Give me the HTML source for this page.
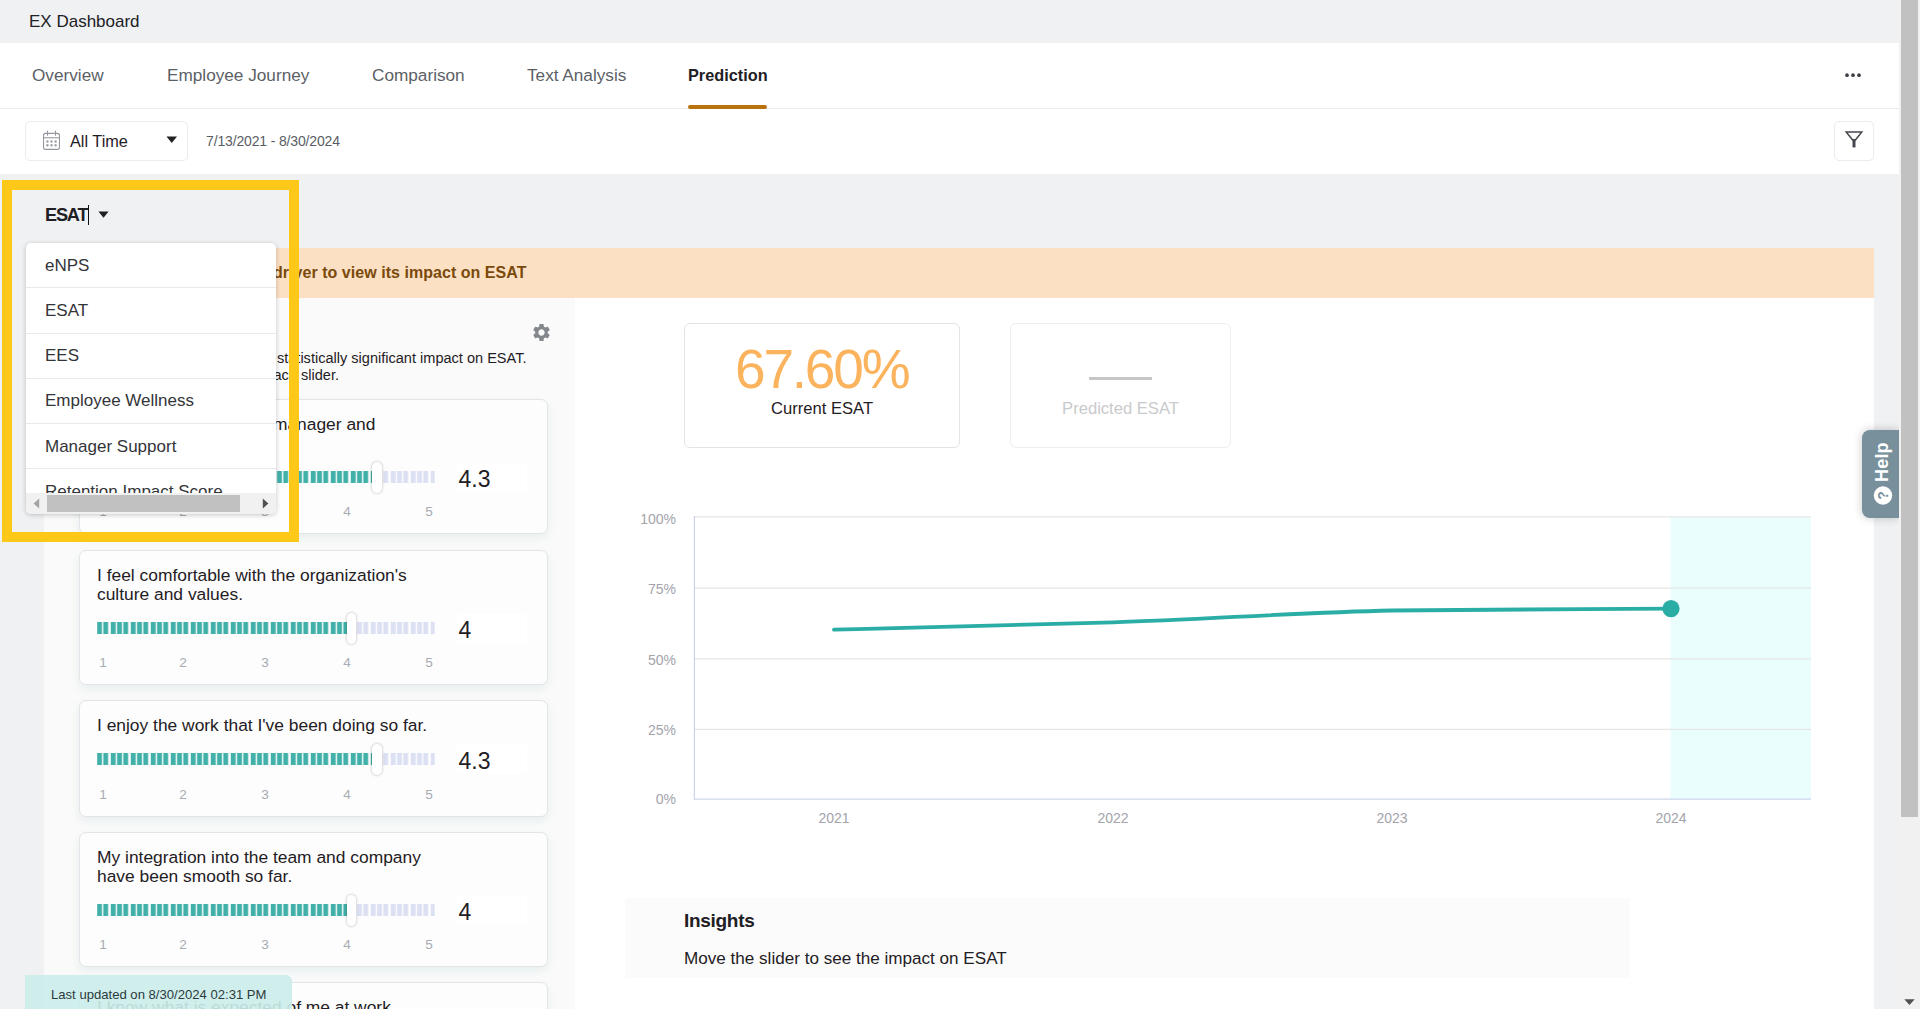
<!DOCTYPE html>
<html lang="en">
<head>
<meta charset="utf-8">
<title>EX Dashboard</title>
<style>
*{box-sizing:border-box;margin:0;padding:0}
html,body{width:1920px;height:1009px;overflow:hidden;background:#f0f1f3;font-family:"Liberation Sans",sans-serif;color:#1f2024}
.abs{position:absolute}
.t{position:absolute;white-space:nowrap;line-height:1}
#topbar{left:0;top:0;width:1899px;height:43px;background:#f0f1f3}
#nav{left:0;top:43px;width:1899px;height:66px;background:#fff;border-bottom:1px solid #eaebee}
#filterbar{left:0;top:109px;width:1899px;height:65px;background:#fff}
.tab{color:#5c5f66;font-size:17.2px}
#banner{left:44px;top:248px;width:1830px;height:50px;background:#fce0c4}
#lpanel{left:44px;top:298px;width:531px;height:711px;background:#fafafa}
#rpanel{left:575px;top:298px;width:1299px;height:711px;background:#fff}
.card{position:absolute;left:79px;width:469px;background:#fdfdfd;border:1px solid #e2e4e8;border-radius:7px;box-shadow:0 4px 10px rgba(40,120,120,.09)}
.q{position:absolute;left:17px;top:15px;font-size:17.4px;line-height:19px;color:#1f2024;white-space:nowrap}
.track{position:absolute;left:17px;height:12px;width:338px}
.thumb{position:absolute;top:-9px;margin-left:0.5px;width:9.6px;height:30.5px;border-radius:4.8px;background:#fff;box-shadow:0 0 3px rgba(0,0,0,.3)}
.val{position:absolute;left:377px;width:70px;height:29px;background:#fff;font-size:23px;line-height:32.5px;padding-left:1.5px;color:#1f2024}
.ddi{position:absolute;left:0;width:250px;height:45.25px;border-bottom:1px solid #e7e9ec;padding-left:19px;font-size:17px;line-height:45px;color:#333438;white-space:nowrap}
.sc{position:absolute;font-size:13.6px;color:#a9acb3;line-height:1;width:20px;text-align:center}
</style>
</head>
<body>
<svg width="0" height="0" style="position:absolute"><defs>
<pattern id="pt" patternUnits="userSpaceOnUse" x="-6.2" y="0" width="20" height="12"><rect x="0" y="0" width="4.85" height="12" fill="#40b0a8"/><rect x="6.25" y="0" width="4.85" height="12" fill="#40b0a8"/><rect x="12.5" y="0" width="4.85" height="12" fill="#40b0a8"/></pattern>
<pattern id="pl" patternUnits="userSpaceOnUse" x="-6.2" y="0" width="20" height="12"><rect x="0" y="0" width="4.85" height="12" fill="#dce0f3"/><rect x="6.25" y="0" width="4.85" height="12" fill="#dce0f3"/><rect x="12.5" y="0" width="4.85" height="12" fill="#dce0f3"/></pattern>
</defs></svg>
<div class="abs" id="topbar"><span class="t" style="left:29px;top:13px;font-size:17px;color:#202125">EX Dashboard</span></div>
<div class="abs" id="nav">
  <span class="t tab" style="left:32px;top:24px">Overview</span>
  <span class="t tab" style="left:167px;top:24px">Employee Journey</span>
  <span class="t tab" style="left:372px;top:24px">Comparison</span>
  <span class="t tab" style="left:527px;top:24px">Text Analysis</span>
  <span class="t tab" style="left:688px;top:24px;font-weight:bold;color:#1f2024;font-size:16.3px">Prediction</span>
  <div class="abs" style="left:688px;top:62px;width:79px;height:4px;background:#b8730f;border-radius:2px"></div>
  <svg class="abs" style="left:1844px;top:29px" width="18" height="6" viewBox="0 0 18 6" fill="#3c3f45"><circle cx="3" cy="3.2" r="1.85"/><circle cx="9" cy="3.2" r="1.85"/><circle cx="15" cy="3.2" r="1.85"/></svg>
</div>
<div class="abs" id="filterbar">
  <div class="abs" style="left:25px;top:12px;width:163px;height:40px;border:1px solid #ebecef;border-radius:5px"></div>
  <svg class="abs" style="left:41.5px;top:20.5px" width="19" height="20.9" viewBox="0 0 20 22" fill="none" stroke="#94979e" stroke-width="1.15">
    <rect x="1.6" y="3.6" width="16.8" height="16.8" rx="2.2"/>
    <line x1="1.6" y1="8.2" x2="18.4" y2="8.2"/>
    <line x1="5.8" y1="1" x2="5.8" y2="5.4" stroke-linecap="round"/>
    <line x1="14.2" y1="1" x2="14.2" y2="5.4" stroke-linecap="round"/>
    <g stroke="none" fill="#94979e">
      <rect x="4.6" y="11" width="2.2" height="2.2"/><rect x="8.9" y="11" width="2.2" height="2.2"/><rect x="13.2" y="11" width="2.2" height="2.2"/>
      <rect x="4.6" y="15" width="2.2" height="2.2"/><rect x="8.9" y="15" width="2.2" height="2.2"/><rect x="13.2" y="15" width="2.2" height="2.2"/>
    </g>
  </svg>
  <span class="t" style="left:70px;top:24px;font-size:16.3px;color:#1f2024">All Time</span>
  <svg class="abs" style="left:166px;top:27px" width="12" height="8" viewBox="0 0 12 8"><path d="M0.5 0.5h10.5L5.75 7z" fill="#222"/></svg>
  <span class="t" style="left:206px;top:25px;font-size:14px;color:#5a5d64;letter-spacing:-0.15px">7/13/2021 - 8/30/2024</span>
  <div class="abs" style="left:1834px;top:12px;width:40px;height:40px;border:1px solid #ebecef;border-radius:5px"></div>
  <svg class="abs" style="left:1844px;top:21px" width="20" height="22" viewBox="0 0 20 22" fill="none" stroke="#44474e" stroke-width="1.5" stroke-linejoin="miter"><path d="M2.2 2h15.6l-6.4 8H8.6z"/><path d="M10 9v8.4" stroke-width="3"/></svg>
</div>
<div class="abs" id="banner"><span class="t" style="right:1347.5px;top:17px;font-size:16px;font-weight:bold;color:#7a4a0c;letter-spacing:0.04px">Move the slider for any driver to view its impact on ESAT</span></div>
<div class="abs" id="lpanel"></div>
<div class="abs" id="rpanel"></div>
<span class="t" style="left:80px;top:322px;font-size:20px;font-weight:bold;color:#1f2024">Drivers</span>
<span class="t" style="right:1393.5px;top:351px;font-size:14.55px;color:#1f2024">The following drivers have a statistically significant impact on ESAT.</span>
<span class="t" style="right:1581px;top:368px;font-size:14.55px;color:#1f2024">Simulate the change by moving each slider.</span>
<svg class="abs" style="left:530.5px;top:321.5px" width="21" height="21" viewBox="0 0 24 24"><path fill="#84878c" d="M19.14 12.94c.04-.3.06-.61.06-.94 0-.32-.02-.64-.07-.94l2.03-1.58a.49.49 0 0 0 .12-.61l-1.92-3.32a.488.488 0 0 0-.59-.22l-2.39.96c-.5-.38-1.03-.7-1.62-.94l-.36-2.54a.484.484 0 0 0-.48-.41h-3.84c-.24 0-.43.17-.47.41l-.36 2.54c-.59.24-1.13.57-1.62.94l-2.39-.96c-.22-.08-.47 0-.59.22L2.74 8.87c-.12.21-.08.47.12.61l2.03 1.58c-.05.3-.09.63-.09.94s.02.64.07.94l-2.03 1.58a.49.49 0 0 0-.12.61l1.92 3.32c.12.22.37.29.59.22l2.39-.96c.5.38 1.03.7 1.62.94l.36 2.54c.05.24.24.41.48.41h3.84c.24 0 .44-.17.47-.41l.36-2.54c.59-.24 1.13-.56 1.62-.94l2.39.96c.22.08.47 0 .59-.22l1.92-3.32c.12-.22.07-.47-.12-.61l-2.01-1.58zM12 15.6c-1.98 0-3.6-1.62-3.6-3.6s1.620-3.6 3.6-3.600 3.600 1.620 3.600 3.600-1.620 3.600-3.600 3.600z"/></svg>
<div class="card" style="top:399px;height:135px">
  <div class="q">I feel supported by my manager and<br>my team.</div>
  <div class="track" style="top:71px"><svg class="abs" style="left:0;top:0" width="338" height="12" viewBox="0 0 338 12"><rect x="0" y="0" width="279.5" height="12" fill="url(#pt)"/><rect x="279.5" y="0" width="58.2" height="12" fill="url(#pl)"/></svg><div class="thumb" style="left:274.5px"></div></div>
  <div class="val" style="top:63px">4.3</div>
  <span class="sc" style="left:13px;top:105px">1</span><span class="sc" style="left:93px;top:105px">2</span><span class="sc" style="left:175px;top:105px">3</span><span class="sc" style="left:257px;top:105px">4</span><span class="sc" style="left:339px;top:105px">5</span>
</div>
<div class="card" style="top:550px;height:135px">
  <div class="q">I feel comfortable with the organization's<br>culture and values.</div>
  <div class="track" style="top:71px"><svg class="abs" style="left:0;top:0" width="338" height="12" viewBox="0 0 338 12"><rect x="0" y="0" width="254.2" height="12" fill="url(#pt)"/><rect x="254.2" y="0" width="83.5" height="12" fill="url(#pl)"/></svg><div class="thumb" style="left:249.2px"></div></div>
  <div class="val" style="top:63px">4</div>
  <span class="sc" style="left:13px;top:105px">1</span><span class="sc" style="left:93px;top:105px">2</span><span class="sc" style="left:175px;top:105px">3</span><span class="sc" style="left:257px;top:105px">4</span><span class="sc" style="left:339px;top:105px">5</span>
</div>
<div class="card" style="top:700px;height:117px">
  <div class="q">I enjoy the work that I've been doing so far.</div>
  <div class="track" style="top:52.3px"><svg class="abs" style="left:0;top:0" width="338" height="12" viewBox="0 0 338 12"><rect x="0" y="0" width="279.5" height="12" fill="url(#pt)"/><rect x="279.5" y="0" width="58.2" height="12" fill="url(#pl)"/></svg><div class="thumb" style="left:274.5px"></div></div>
  <div class="val" style="top:44px">4.3</div>
  <span class="sc" style="left:13px;top:87px">1</span><span class="sc" style="left:93px;top:87px">2</span><span class="sc" style="left:175px;top:87px">3</span><span class="sc" style="left:257px;top:87px">4</span><span class="sc" style="left:339px;top:87px">5</span>
</div>
<div class="card" style="top:832px;height:135px">
  <div class="q">My integration into the team and company<br>have been smooth so far.</div>
  <div class="track" style="top:71px"><svg class="abs" style="left:0;top:0" width="338" height="12" viewBox="0 0 338 12"><rect x="0" y="0" width="254.2" height="12" fill="url(#pt)"/><rect x="254.2" y="0" width="83.5" height="12" fill="url(#pl)"/></svg><div class="thumb" style="left:249.2px"></div></div>
  <div class="val" style="top:63px">4</div>
  <span class="sc" style="left:13px;top:105px">1</span><span class="sc" style="left:93px;top:105px">2</span><span class="sc" style="left:175px;top:105px">3</span><span class="sc" style="left:257px;top:105px">4</span><span class="sc" style="left:339px;top:105px">5</span>
</div>
<div class="card" style="top:982px;height:117px">
  <div class="q">I know what is expected of me at work.</div>
  <div class="track" style="top:52.3px"><svg class="abs" style="left:0;top:0" width="338" height="12" viewBox="0 0 338 12"><rect x="0" y="0" width="254.2" height="12" fill="url(#pt)"/><rect x="254.2" y="0" width="83.5" height="12" fill="url(#pl)"/></svg><div class="thumb" style="left:249.2px"></div></div>
  <div class="val" style="top:44px">4</div>
  <span class="sc" style="left:13px;top:87px">1</span><span class="sc" style="left:93px;top:87px">2</span><span class="sc" style="left:175px;top:87px">3</span><span class="sc" style="left:257px;top:87px">4</span><span class="sc" style="left:339px;top:87px">5</span>
</div>
<div class="abs" style="left:684px;top:323px;width:276px;height:125px;border:1px solid #e2e3e5;border-radius:6px;background:#fff"></div>
<span class="t" id="big" style="left:735px;top:342px;font-size:55px;color:#fcb35d;letter-spacing:-2.2px">67.60%</span>
<span class="t" style="left:684px;width:276px;text-align:center;top:401px;font-size:16.6px;color:#1f2024">Current ESAT</span>
<div class="abs" style="left:1010px;top:323px;width:221px;height:125px;border:1px solid #efeff1;border-radius:6px;background:#fff"></div>
<div class="abs" style="left:1089px;top:377px;width:63px;height:3px;background:#c6c6c6"></div>
<span class="t" style="left:1010px;width:221px;text-align:center;top:401px;font-size:16.6px;color:#c9cacc">Predicted ESAT</span>
<svg class="abs" style="left:600px;top:490px" width="1260" height="350" viewBox="600 490 1260 350" font-family="Liberation Sans, sans-serif">
  <rect x="1670.5" y="517" width="140.5" height="282.5" fill="#eafefe"/>
  <g stroke="#e6e6e6" stroke-width="1.25">
    <line x1="694" y1="516.75" x2="1811" y2="516.75"/><line x1="694" y1="588" x2="1811" y2="588"/><line x1="694" y1="658.9" x2="1811" y2="658.9"/><line x1="694" y1="729.4" x2="1811" y2="729.4"/>
  </g>
  <line x1="694.4" y1="516.2" x2="694.4" y2="799.7" stroke="#ccd6eb" stroke-width="1.25"/>
  <line x1="693.8" y1="799.1" x2="1811" y2="799.1" stroke="#ccd6eb" stroke-width="1.25"/>
  <g font-size="14" fill="#a3a4ab" text-anchor="end">
    <text x="676" y="523.5">100%</text><text x="676" y="594">75%</text><text x="676" y="665">50%</text><text x="676" y="735">25%</text><text x="676" y="804">0%</text>
  </g>
  <g font-size="14" fill="#a3a4ab" text-anchor="middle">
    <text x="834" y="823">2021</text><text x="1113" y="823">2022</text><text x="1392" y="823">2023</text><text x="1671" y="823">2024</text>
  </g>
  <path d="M834 629.6 C 927 627.5, 1020 625.5, 1113 622.4 C 1206 619.3, 1299 612.5, 1392 610.5 C 1485 609.3, 1578 609.2, 1671 608.6" fill="none" stroke="#2aada5" stroke-width="3.8" stroke-linecap="round" stroke-linejoin="round"/>
  <circle cx="1671" cy="608.6" r="8.6" fill="#2aada5"/>
</svg>
<div class="abs" style="left:625px;top:898px;width:1005px;height:80px;background:#fbfbfb"></div>
<span class="t" style="left:684px;top:910.5px;font-size:19px;font-weight:bold;color:#1f2024;letter-spacing:-0.3px">Insights</span>
<span class="t" style="left:684px;top:950px;font-size:17.1px;color:#1f2024">Move the slider to see the impact on ESAT</span>
<div class="abs" style="left:25px;top:975px;width:267px;height:34px;background:rgba(203,237,234,.9);border-top-right-radius:6px"></div>
<span class="t" style="left:51px;top:988px;font-size:13.1px;color:#2b3a3c">Last updated on 8/30/2024 02:31 PM</span>
<div class="abs" style="left:1862px;top:430px;width:37px;height:88px;background:#78909c;border-radius:8px 0 0 8px;box-shadow:0 0 10px rgba(0,0,0,.22)"></div>
<svg class="abs" style="left:1862px;top:430px" width="37" height="88" viewBox="0 0 37 88" font-family="Liberation Sans, sans-serif">
  <circle cx="21" cy="65.5" r="9.2" fill="#fff"/>
  <text transform="translate(26.2,65.5) rotate(-90)" text-anchor="middle" font-size="14" font-weight="bold" fill="#78909c">?</text>
  <text transform="translate(26.3,52) rotate(-90)" font-size="18" letter-spacing="0.2" font-weight="bold" fill="#fff">Help</text>
</svg>
<div class="abs" style="left:1899px;top:0;width:21px;height:1009px;background:#f1f1f1"></div>
<div class="abs" style="left:1901px;top:0;width:17px;height:817px;background:#c1c1c1"></div>
<svg class="abs" style="left:1904px;top:999px" width="11" height="7" viewBox="0 0 11 7"><path d="M0.3 0.3h10.4L5.5 6z" fill="#505050"/></svg>
<span class="t" style="left:45px;top:205.6px;font-size:18.2px;font-weight:bold;color:#1f2024;letter-spacing:-1.2px">ESAT</span>
<div class="abs" style="left:88px;top:205px;width:1px;height:20px;background:#111"></div>
<svg class="abs" style="left:98px;top:211px" width="12" height="8" viewBox="0 0 12 8"><path d="M0.4 0.6h10.2L5.5 6.8z" fill="#1f2024"/></svg>
<div class="abs" id="dd" style="left:26px;top:243px;width:250px;height:271px;background:#fff;border-radius:5px;box-shadow:0 1px 5px rgba(0,0,0,.22);overflow:hidden">
  <div class="ddi" style="top:0">eNPS</div>
  <div class="ddi" style="top:45.25px">ESAT</div>
  <div class="ddi" style="top:90.5px;line-height:43.5px">EES</div>
  <div class="ddi" style="top:135.75px;line-height:43.5px">Employee Wellness</div>
  <div class="ddi" style="top:181px">Manager Support</div>
  <div class="ddi" style="top:226.25px">Retention Impact Score</div>
  <div class="abs" style="left:0;top:250px;width:250px;height:22px;background:#f1f1f1"></div>
  <div class="abs" style="left:21px;top:252px;width:193px;height:17px;background:#c1c1c1"></div>
  <svg class="abs" style="left:7px;top:255px" width="7" height="11" viewBox="0 0 7 11"><path d="M6.2 0.4v10.2L0.6 5.5z" fill="#a3a3a3"/></svg>
  <svg class="abs" style="left:236px;top:255px" width="7" height="11" viewBox="0 0 7 11"><path d="M0.8 0.4v10.2L6.4 5.5z" fill="#505050"/></svg>
</div>
<div class="abs" style="left:2px;top:180px;width:297px;height:362px;border:10px solid #fec818"></div>


</body>
</html>
